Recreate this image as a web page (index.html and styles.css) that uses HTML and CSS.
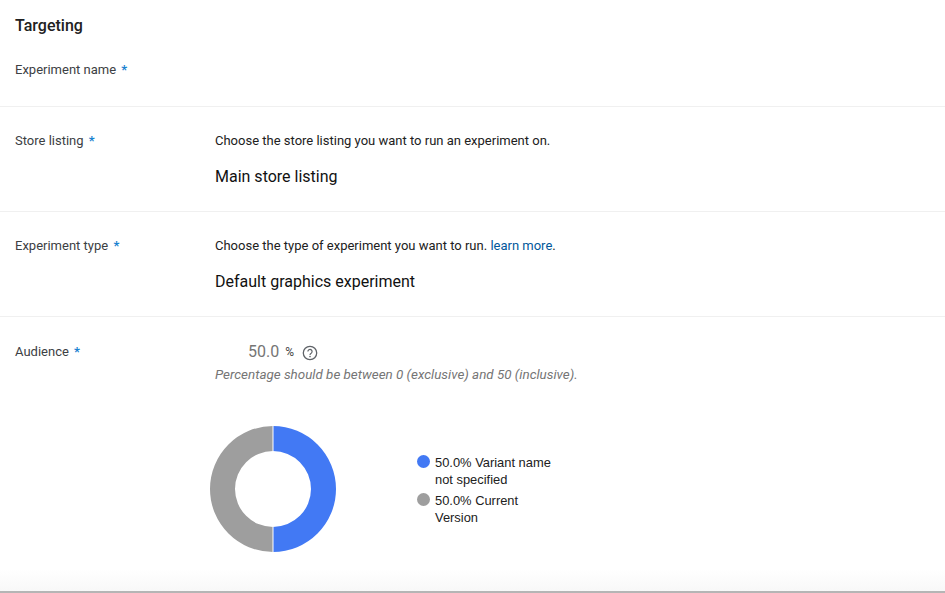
FILE: index.html
```html
<!DOCTYPE html>
<html lang="en">
<head>
  <meta charset="UTF-8">
  <title>Targeting</title>
  <link rel="stylesheet" href="styles.css">
</head>
<body>

  <div class="page">
    <h2 class="page-title">Targeting</h2>

    <div class="row row-name">
      <div class="row-label">Experiment name <span class="req">*</span></div>
    </div>

    <div class="row row-choice">
      <div class="row-label">Store listing <span class="req">*</span></div>
      <div class="row-body">
        <p class="hint">Choose the store listing you want to run an experiment on.</p>
        <p class="value">Main store listing</p>
      </div>
    </div>

    <div class="row row-choice">
      <div class="row-label">Experiment type <span class="req">*</span></div>
      <div class="row-body">
        <p class="hint">Choose the type of experiment you want to run. <a href="#" class="link">learn more</a>.</p>
        <p class="value">Default graphics experiment</p>
      </div>
    </div>

    <div class="row row-audience">
      <div class="row-label">Audience <span class="req">*</span></div>
      <div class="row-body">
        <div class="percent">
          <span class="percent-num">50.0</span>
          <span class="percent-sign">%</span>
          <svg class="help" width="16" height="16" viewBox="0 0 16 16" fill="none">
            <circle cx="8" cy="8" r="6.7" stroke="#5f6368" stroke-width="1.3"/>
            <path d="M5.9 6.5a2.1 2.1 0 1 1 3.3 1.7c-.8.5-1.2.9-1.2 1.7" stroke="#5f6368" stroke-width="1.2"/>
            <circle cx="8" cy="11.6" r=".8" fill="#5f6368"/>
          </svg>
        </div>
        <p class="note">Percentage should be between 0 (exclusive) and 50 (inclusive).</p>

        <div class="chart">
          <svg class="donut" width="126" height="126" viewBox="0 0 126 126">
            <path d="M63 0a63 63 0 0 1 0 126V101a38 38 0 0 0 0-76z" fill="#4279f4"/>
            <path d="M63 0a63 63 0 0 0 0 126V101a38 38 0 0 1 0-76z" fill="#9e9e9e"/>
            <rect x="62.5" y="0" width="1" height="25" fill="#fff"/>
            <rect x="62.5" y="101" width="1" height="25" fill="#fff"/>
          </svg>
          <ul class="legend">
            <li class="legend-item"><span class="dot dot-blue"></span><span>50.0% Variant name not specified</span></li>
            <li class="legend-item"><span class="dot dot-grey"></span><span>50.0% Current Version</span></li>
          </ul>
        </div>
      </div>
    </div>
  </div>

  <div class="fade"></div>

</body>
</html>
```

FILE: styles.css
```css
html, body { margin: 0; padding: 0; height: 100%; background: #fff; font-family: Roboto, Arial, sans-serif; color: #212121; overflow: hidden; }
body { display: flex; flex-direction: column; }
.page { flex: 1; min-height: 0; }
.page-title { margin: 0; padding: 16px 15px 0; font-size: 16px; line-height: 20px; font-weight: 500; }
.row { display: flex; padding: 0 15px; border-bottom: 1px solid #f0f0f0; font-size: 13px; line-height: 18px; }
.row:last-child { border-bottom: none; }
.row-name { height: 71px; padding-top: 25px; box-sizing: border-box; }
.row-choice { height: 105px; padding-top: 25px; box-sizing: border-box; }
.row-audience { padding-top: 26px; }
.row-label { width: 200px; flex-shrink: 0; color: #3c4043; }
.req { color: #1a82d0; font-weight: 700; margin-left: 2px; }
.hint { margin: 0; }
.value { margin: 18px 0 0; font-size: 16px; line-height: 18px; color: #111; }
.link { color: #01579b; text-decoration: none; }
.percent { display: flex; align-items: center; padding-left: 33px; height: 18px; color: #757575; }
.percent-num { font-size: 16px; }
.percent-sign { font-size: 12px; color: #444; margin-left: 6px; }
.help { margin-left: 8px; margin-top: 2px; }
.note { margin: 5px 0 0; font-size: 13.4px; font-style: italic; color: #757575; }
.chart { display: flex; align-items: center; margin-top: 42px; }
.donut { margin-left: -5px; }
.legend { list-style: none; margin: 6px 0 0 81px; padding: 0; width: 135px; font-family: "Liberation Sans", Arial, sans-serif; font-size: 12.9px; line-height: 17px; }
.legend-item { display: flex; gap: 5px; margin-bottom: 4px; }
.dot { width: 13px; height: 13px; border-radius: 50%; flex-shrink: 0; margin-top: 1px; }
.dot-blue { background: #4279f4; }
.dot-grey { background: #9e9e9e; }
.fade { height: 24px; flex-shrink: 0; background: linear-gradient(#fff, #f8f8f8); border-bottom: 2px solid #b5b5b5; box-sizing: border-box; }
```
